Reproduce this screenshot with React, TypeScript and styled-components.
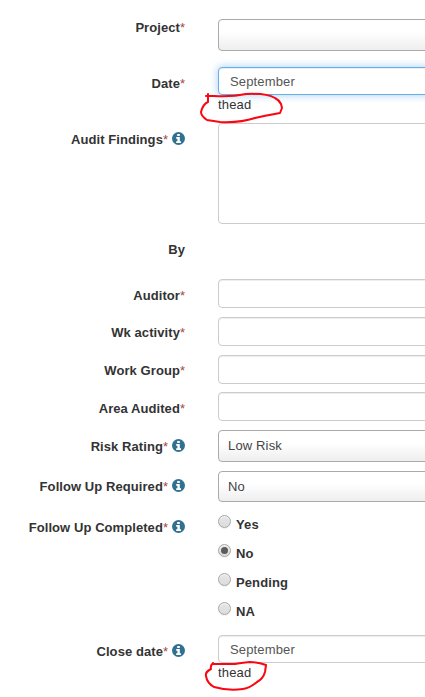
import React from "react";
import styled, { createGlobalStyle, css } from "styled-components";

const GlobalStyle = createGlobalStyle`
  *, *::before, *::after { box-sizing: border-box; }
  body {
    margin: 0;
    background: #fff;
    color: #333;
    font: 13px/20px "Liberation Sans", Arial, sans-serif;
    overflow: hidden;
  }
`;

const Form = styled.form`
  display: flex;
  flex-direction: column;
  width: 100%;
  height: 697px;
  padding-top: 19px;
  overflow: hidden;
`;

const Row = styled.div<{ $height: number }>`
  display: grid;
  grid-template-columns: 185px 1fr;
  column-gap: 33px;
  flex: 0 0 ${(p) => p.$height}px;
`;

const Label = styled.label<{ $drop: number }>`
  display: flex;
  justify-content: flex-end;
  height: 20px;
  margin-top: ${(p) => p.$drop}px;
  font-weight: bold;
  letter-spacing: 0.07px;
  white-space: nowrap;
`;

const Required = styled.span`
  color: #a94442;
  font-weight: normal;
  letter-spacing: 0;
`;

const InfoIcon = styled.svg`
  width: 13px;
  height: 13px;
  margin: 2px 0 0 4px;
`;

const Field = styled.div`
  min-width: 0;
`;

const frame = css`
  display: block;
  width: 260px;
  margin: 0;
  border-radius: 4px;
  font: inherit;
  outline: none;
`;

const Input = styled.input<{ $height?: number; $focused?: boolean }>`
  ${frame}
  height: ${(p) => p.$height ?? 29}px;
  padding: 0 11px;
  border: 1px solid ${(p) => (p.$focused ? "#66afe9" : "#ccc")};
  background: #fff;
  color: #555;
  letter-spacing: 0.15px;
  box-shadow: ${(p) =>
    p.$focused
      ? "inset 0 1px 1px rgba(0,0,0,.075), 0 0 8px rgba(102,175,233,.6)"
      : "inset 0 1px 1px rgba(0,0,0,.075)"};
`;

const TextArea = styled.textarea`
  ${frame}
  height: 101px;
  border: 1px solid #ccc;
  background: #fff;
  resize: none;
`;

const Select = styled.div<{ $height: number }>`
  ${frame}
  height: ${(p) => p.$height}px;
  padding: 5px 9px;
  border: 1px solid #aaa;
  background: linear-gradient(to top, #eee 0%, #fff 60%);
  color: #444;
  letter-spacing: 0.15px;
`;

const Hint = styled.div`
  position: relative;
  width: max-content;
  height: 20px;
  letter-spacing: 0.15px;
`;

const Scribble = styled.svg`
  position: absolute;
  overflow: visible;
  left: 0;
  top: 0;
  width: 1px;
  height: 1px;
  fill: none;
  stroke: #fa0510;
  stroke-width: 2;
  stroke-linejoin: round;
  stroke-linecap: round;
`;

const Choice = styled.label`
  display: flex;
  align-items: flex-start;
  height: 29px;
  gap: 5px;
  font-weight: bold;
  letter-spacing: 0.1px;
`;

const ChoiceText = styled.span`
  height: 20px;
`;

const Radio = styled.input`
  appearance: none;
  display: grid;
  place-items: center;
  flex: none;
  width: 13px;
  height: 13px;
  margin: 0;
  border: 1px solid #a6a6a6;
  border-radius: 50%;
  background: linear-gradient(#e6e6e6, #dcdcdc);
  box-shadow: inset 0 1px 1px rgba(255, 255, 255, 0.6), 0 1px 1px rgba(0, 0, 0, 0.06);

  &:checked::before {
    content: "";
    width: 7px;
    height: 7px;
    border-radius: 50%;
    background: #5c5c5c;
  }
`;

function Caption({ text, drop, required = true, info = false }: {
  text: string; drop: number; required?: boolean; info?: boolean;
}) {
  return (
    <Label $drop={drop}>
      {text}
      {required && <Required>*</Required>}
      {info && (
        <InfoIcon viewBox="0 0 13 13">
          <circle cx="6.5" cy="6.5" r="6.5" fill="#31708f" />
          <path d="M5.2 2h2.6v2H5.2zM4.2 5h3.6v4.2H9V11H4.2V9.2h1.2V6.7H4.2z" fill="#fff" />
        </InfoIcon>
      )}
    </Label>
  );
}

const textRows = [
  { text: "Auditor", height: 38, drop: 7 },
  { text: "Wk activity", height: 38, drop: 6 },
  { text: "Work Group", height: 37, drop: 6 },
  { text: "Area Audited", height: 38, drop: 7 },
];

export default function App() {
  return (
    <>
      <GlobalStyle />
      <Form>
        <Row $height={48}>
          <Caption text="Project" drop={-1} />
          <Field><Select $height={32} /></Field>
        </Row>
        <Row $height={56}>
          <Caption text="Date" drop={7} />
          <Field>
            <Input $height={28} $focused defaultValue="September" />
            <Hint>
              thead
              <Scribble>
                <path d="M-12 1H-4Q14 2 28 -1Q48 -2 57 3Q61 5 63 9L64 13L62 18Q45 21 37 23Q22 28 2 27L-11 25Q-17 21 -17 17Q-15 9 -10 7V-1" />
              </Scribble>
            </Hint>
          </Field>
        </Row>
        <Row $height={116}>
          <Caption text="Audit Findings" drop={7} info />
          <Field><TextArea /></Field>
        </Row>
        <Row $height={40}>
          <Caption text="By" drop={1} required={false} />
        </Row>
        {textRows.map((row) => (
          <Row key={row.text} $height={row.height}>
            <Caption text={row.text} drop={row.drop} />
            <Field><Input /></Field>
          </Row>
        ))}
        <Row $height={41}>
          <Caption text="Risk Rating" drop={7} info />
          <Field><Select $height={32}>Low Risk</Select></Field>
        </Row>
        <Row $height={44}>
          <Caption text="Follow Up Required" drop={6} info />
          <Field><Select $height={31}>No</Select></Field>
        </Row>
        <Row $height={120}>
          <Caption text="Follow Up Completed" drop={3} info />
          <Field>
            {["Yes", "No", "Pending", "NA"].map((name) => (
              <Choice key={name}>
                <Radio type="radio" name="completed" defaultChecked={name === "No"} />
                <ChoiceText>{name}</ChoiceText>
              </Choice>
            ))}
          </Field>
        </Row>
        <Row $height={56}>
          <Caption text="Close date" drop={7} info />
          <Field>
            <Input $height={28} defaultValue="September" />
            <Hint>
              thead
              <Scribble>
                <path d="M-5 0Q-8 3 -7 6Q-13 9 -12 13Q-11 20 -4 24Q10 28 25 26Q32 25 39 19Q45 16 47 9L48 2Q40 -1 32 -1Q22 0 17 1L-5 1" />
              </Scribble>
            </Hint>
          </Field>
        </Row>
      </Form>
    </>
  );
}
